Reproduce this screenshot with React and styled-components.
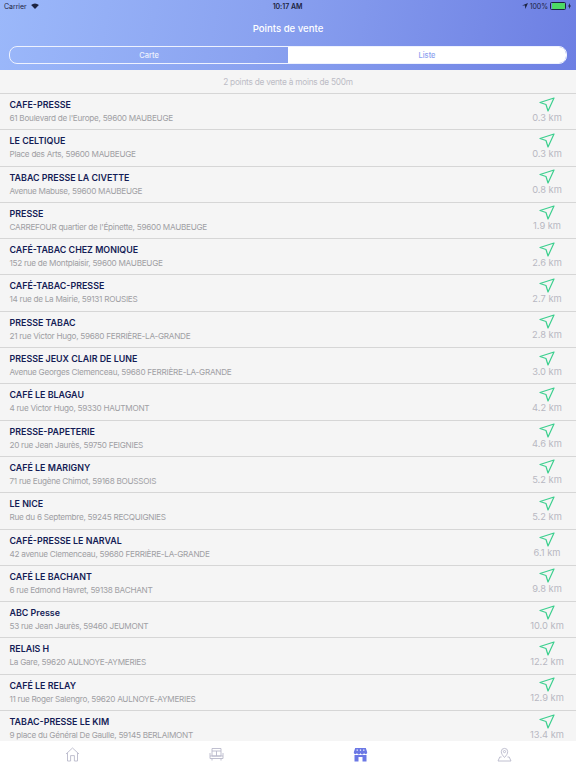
import React from "react";
import styled, { createGlobalStyle } from "styled-components";

const Global = createGlobalStyle`
  html, body { margin: 0; padding: 0; background: #f5f5f5; }
  body { font-family: Inter, "Liberation Sans", sans-serif; }
`;
const Page = styled.div`
  width: 576px; height: 768px; display: flex; flex-direction: column; overflow: hidden; background: #f5f5f5;
`;
const Header = styled.header`
  height: 70px; flex: none; display: flex; flex-direction: column;
  background: linear-gradient(100deg, #9bb8fa 0%, #8aa2f0 45%, #6d7fe3 100%);
`;
const StatusBar = styled.div`
  height: 12px; padding: 0 5px 0 4px; display: grid; grid-template-columns: 1fr auto 1fr; align-items: center;
  font-size: 7px; color: #1c2340; letter-spacing: -0.05px;
`;
const StatusLeft = styled.div`display: flex; align-items: center; gap: 4px;`;
const StatusRight = styled.div`display: flex; align-items: center; justify-content: flex-end; gap: 2px;`;
const Clock = styled.div`font-weight: 600;`;
const Title = styled.div`
  margin-top: 10px; text-align: center; color: #fff; font-size: 9.6px; font-weight: 500; line-height: 13px;
`;
const Segments = styled.div`
  margin: 11px 9px 0; height: 16px; display: flex; border: 1px solid #eef2fe; border-radius: 8px; overflow: hidden;
`;
const Segment = styled.div`
  flex: 1; display: flex; align-items: center; justify-content: center; font-size: 7.5px; font-weight: 500;
  color: ${p => (p.$active ? "#8c9ff0" : "#eef2fe")};
  background: ${p => (p.$active ? "#fff" : "transparent")};
`;
const Notice = styled.div`
  height: 23px; flex: none; display: flex; align-items: center; justify-content: center;
  font-size: 8.3px; letter-spacing: -0.25px; color: #bcbcc5; border-bottom: 1px solid #d6d6d6;
`;
const List = styled.div`flex: 1; min-height: 0; overflow: hidden;`;
const Row = styled.div`
  height: 36.3px; box-sizing: border-box; padding: 0 9.5px; display: flex; justify-content: space-between;
  border-bottom: 1px solid #d6d6d6;
`;
const RowText = styled.div`display: flex; flex-direction: column; padding-top: 5px;`;
const Name = styled.div`font-size: 8.9px; font-weight: 600; line-height: 12px; color: #141c55;`;
const Address = styled.div`font-size: 8.2px; letter-spacing: -0.28px; line-height: 12px; margin-top: 1px; color: #a0a0a4;`;
const Distance = styled.div`
  width: 39px; flex: none; padding-top: 2.5px; display: flex; flex-direction: column; align-items: center;
  font-size: 9.3px; color: #b8b8c2; white-space: nowrap;
`;
const DistanceText = styled.span`line-height: 12px;`;
const TabBar = styled.nav`
  height: 27px; flex: none; background: #fff; display: grid; grid-template-columns: repeat(4, 1fr);
`;
const Tab = styled.div`display: flex; align-items: center; justify-content: center; color: ${p => (p.$on ? "#6b78e5" : "#b9b9cb")};`;

const Arrow = () => (
  <svg width="16" height="15" viewBox="0 0 16 15" fill="none">
    <path d="M15 1 L1 5.5 L7 7.5 L9 14 Z" stroke="#3ccf8e" strokeWidth="1.2" strokeLinejoin="round" />
  </svg>
);
const Home = () => (
  <svg width="15" height="15" viewBox="0 0 15 15" fill="none" stroke="currentColor" strokeWidth="0.9" strokeLinejoin="round">
    <path d="M1 7 L7.5 1 L14 7" /><path d="M2.5 6 V14 H5.6 V8.6 H9.4 V14 H12.5 V6" />
  </svg>
);
const Cafe = () => (
  <svg width="15" height="15" viewBox="0 0 15 15" fill="none" stroke="currentColor" strokeWidth="0.9" strokeLinejoin="round">
    <path d="M3 1.5 H12 V9 H3 Z M3 4 H12 M7.5 4 V9" />
    <path d="M1 6 V11.5 H14 V6 M1 9 H14 M3 11.5 V13.5 M12 11.5 V13.5" />
  </svg>
);
const Shop = () => (
  <svg width="15" height="15" viewBox="0 0 15 15" fill="currentColor">
    <path d="M2.2 1 H12.8 L14.2 5.2 A1.6 1.6 0 0 1 11 5.8 A1.7 1.7 0 0 1 7.5 5.8 A1.7 1.7 0 0 1 4 5.8 A1.6 1.6 0 0 1 .8 5.2 Z" />
    <path d="M1.5 8 H13.5 V14.5 H9.5 V10 H5.5 V14.5 H1.5 Z" />
    <path d="M3.6 2.6 h1.2 v1.2 h-1.2 Z M6.9 2.6 h1.2 v1.2 h-1.2 Z M10.2 2.6 h1.2 v1.2 h-1.2 Z" fill="#fff" />
  </svg>
);
const Pin = () => (
  <svg width="15" height="15" viewBox="0 0 15 15" fill="none" stroke="currentColor" strokeWidth="0.9" strokeLinejoin="round">
    <path d="M7.5 10.5 C5.5 8.3 4.3 6.6 4.3 4.6 A3.2 3.2 0 0 1 10.7 4.6 C10.7 6.6 9.5 8.3 7.5 10.5 Z" />
    <circle cx="7.5" cy="4.6" r="1.1" />
    <path d="M4.5 10 H2.8 L1 14 H14 L12.2 10 H10.5" />
  </svg>
);
const Wifi = () => (
  <svg width="8" height="6" viewBox="0 0 9 7" fill="#1c2340"><path d="M4.5 7 L0 2.3 A6.5 6.5 0 0 1 9 2.3 Z" /></svg>
);
const Locate = () => (
  <svg width="6" height="6" viewBox="0 0 6 6" fill="#1c2340"><path d="M6 0 L0 2.6 H3 L3.3 6 Z" /></svg>
);
const Battery = styled.span`
  width: 13px; height: 5.5px; border: 0.5px solid #1c2340; border-radius: 1.5px; padding: 0.5px; display: flex;
`;
const BatteryFill = styled.span`flex: 1; background: #4cd964; border-radius: 1px;`;
const Bolt = () => (
  <svg width="3" height="6" viewBox="0 0 3 6" fill="#1c2340"><path d="M2 0 L0 3.4 H1.2 L1 6 L3 2.6 H1.8 Z" /></svg>
);

const items = [
  ["CAFE-PRESSE", "61 Boulevard de l'Europe, 59600 MAUBEUGE", "0.3 km"],
  ["LE CELTIQUE", "Place des Arts, 59600 MAUBEUGE", "0.3 km"],
  ["TABAC PRESSE LA CIVETTE", "Avenue Mabuse, 59600 MAUBEUGE", "0.8 km"],
  ["PRESSE", "CARREFOUR quartier de l'Épinette, 59600 MAUBEUGE", "1.9 km"],
  ["CAFÉ-TABAC CHEZ MONIQUE", "152 rue de Montplaisir, 59600 MAUBEUGE", "2.6 km"],
  ["CAFÉ-TABAC-PRESSE", "14 rue de La Mairie, 59131 ROUSIES", "2.7 km"],
  ["PRESSE TABAC", "21 rue Victor Hugo, 59680 FERRIÈRE-LA-GRANDE", "2.8 km"],
  ["PRESSE JEUX CLAIR DE LUNE", "Avenue Georges Clemenceau, 59680 FERRIÈRE-LA-GRANDE", "3.0 km"],
  ["CAFÉ LE BLAGAU", "4 rue Victor Hugo, 59330 HAUTMONT", "4.2 km"],
  ["PRESSE-PAPETERIE", "20 rue Jean Jaurès, 59750 FEIGNIES", "4.6 km"],
  ["CAFÉ LE MARIGNY", "71 rue Eugène Chimot, 59168 BOUSSOIS", "5.2 km"],
  ["LE NICE", "Rue du 6 Septembre, 59245 RECQUIGNIES", "5.2 km"],
  ["CAFÉ-PRESSE LE NARVAL", "42 avenue Clemenceau, 59680 FERRIÈRE-LA-GRANDE", "6.1 km"],
  ["CAFÉ LE BACHANT", "6 rue Edmond Havret, 59138 BACHANT", "9.8 km"],
  ["ABC Presse", "53 rue Jean Jaurès, 59460 JEUMONT", "10.0 km"],
  ["RELAIS H", "La Gare, 59620 AULNOYE-AYMERIES", "12.2 km"],
  ["CAFÉ LE RELAY", "11 rue Roger Salengro, 59620 AULNOYE-AYMERIES", "12.9 km"],
  ["TABAC-PRESSE LE KIM", "9 place du Général De Gaulle, 59145 BERLAIMONT", "13.4 km"],
];

export default function App() {
  return (
    <Page>
      <Global />
      <Header>
        <StatusBar>
          <StatusLeft>Carrier <Wifi /></StatusLeft>
          <Clock>10:17 AM</Clock>
          <StatusRight><Locate /> 100% <Battery><BatteryFill /></Battery><Bolt /></StatusRight>
        </StatusBar>
        <Title>Points de vente</Title>
        <Segments>
          <Segment>Carte</Segment>
          <Segment $active>Liste</Segment>
        </Segments>
      </Header>
      <Notice>2 points de vente à moins de 500m</Notice>
      <List>
        {items.map(([n, a, d]) => (
          <Row key={n}>
            <RowText><Name>{n}</Name><Address>{a}</Address></RowText>
            <Distance><Arrow /><DistanceText>{d}</DistanceText></Distance>
          </Row>
        ))}
      </List>
      <TabBar>
        <Tab><Home /></Tab>
        <Tab><Cafe /></Tab>
        <Tab $on><Shop /></Tab>
        <Tab><Pin /></Tab>
      </TabBar>
    </Page>
  );
}
